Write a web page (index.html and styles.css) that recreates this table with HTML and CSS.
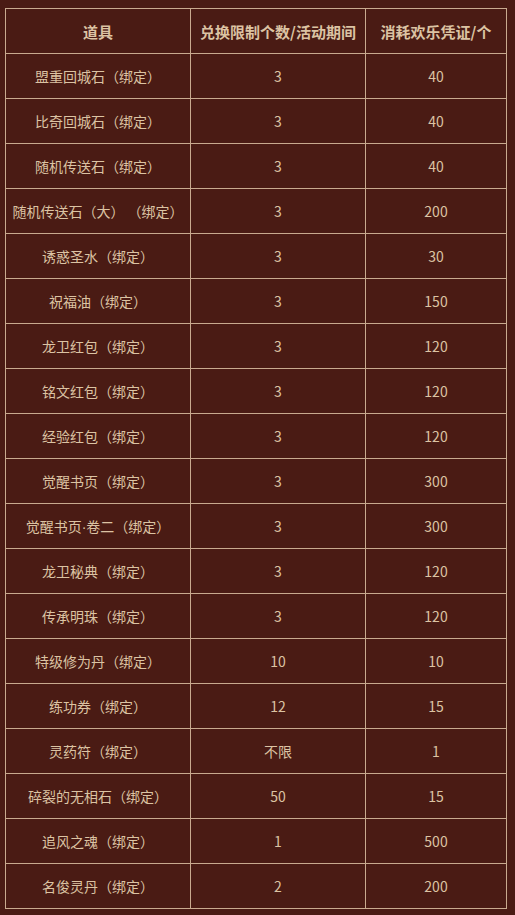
FILE: index.html
```html
<!DOCTYPE html>
<html lang="zh">
<head>
<meta charset="utf-8">
<link rel="stylesheet" href="styles.css">
</head>
<body>
<div class="wrap">
<table class="tbl">
<colgroup><col class="c1"><col class="c2"><col class="c3"></colgroup>
<thead>
<tr><th>道具</th><th>兑换限制个数/活动期间</th><th>消耗欢乐凭证/个</th></tr>
</thead>
<tbody>
<tr><td>盟重回城石（绑定）</td><td>3</td><td>40</td></tr>
<tr><td>比奇回城石（绑定）</td><td>3</td><td>40</td></tr>
<tr><td>随机传送石（绑定）</td><td>3</td><td>40</td></tr>
<tr><td>随机传送石（大） （绑定）</td><td>3</td><td>200</td></tr>
<tr><td>诱惑圣水（绑定）</td><td>3</td><td>30</td></tr>
<tr><td>祝福油（绑定）</td><td>3</td><td>150</td></tr>
<tr><td>龙卫红包（绑定）</td><td>3</td><td>120</td></tr>
<tr><td>铭文红包（绑定）</td><td>3</td><td>120</td></tr>
<tr><td>经验红包（绑定）</td><td>3</td><td>120</td></tr>
<tr><td>觉醒书页（绑定）</td><td>3</td><td>300</td></tr>
<tr><td>觉醒书页<span class="dot">·</span>卷二（绑定）</td><td>3</td><td>300</td></tr>
<tr><td>龙卫秘典（绑定）</td><td>3</td><td>120</td></tr>
<tr><td>传承明珠（绑定）</td><td>3</td><td>120</td></tr>
<tr><td>特级修为丹（绑定）</td><td>10</td><td>10</td></tr>
<tr><td>练功券（绑定）</td><td>12</td><td>15</td></tr>
<tr><td>灵药符（绑定）</td><td>不限</td><td>1</td></tr>
<tr><td>碎裂的无相石（绑定）</td><td>50</td><td>15</td></tr>
<tr><td>追风之魂（绑定）</td><td>1</td><td>500</td></tr>
<tr><td>名俊灵丹（绑定）</td><td>2</td><td>200</td></tr>
</tbody>
</table>
</div>
</body>
</html>
```
FILE: styles.css
```css
html, body {
  margin: 0;
  padding: 0;
  background: #4a1b14;
}
.wrap {
  padding: 8px 0 0 5px;
}
.tbl {
  border-collapse: collapse;
  width: 501px;
  table-layout: fixed;
  font-family: "Noto Sans CJK SC", "Noto Sans", sans-serif;
  color: #dcc3a3;
  text-spacing-trim: space-all;
}
.c1 { width: 185px; }
.c2 { width: 175px; }
.c3 { width: 141px; }
.tbl th, .tbl td {
  border: 1px solid #c9aa8f;
  height: 44px;
  padding: 0;
  text-align: center;
  vertical-align: middle;
  white-space: pre;
}
.tbl th {
  font-size: 15px;
  font-weight: bold;
}
.tbl td {
  font-size: 14px;
  font-weight: normal;
}
.dot {
  font-family: "Liberation Sans", sans-serif;
}
```
